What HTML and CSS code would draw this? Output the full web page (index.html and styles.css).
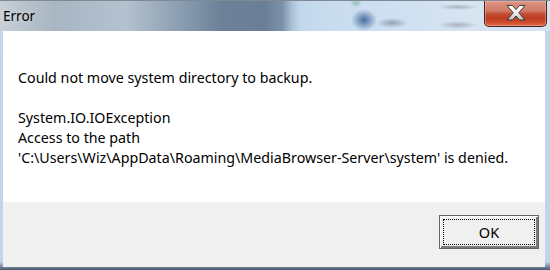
FILE: index.html
```html
<!DOCTYPE html>
<html>
<head>
<meta charset="utf-8">
<link rel="stylesheet" href="styles.css">
</head>
<body>
<div class="window">
  <div class="titlebar">
    <span class="title">Error</span>
    <button class="close" aria-label="Close">
      <svg width="20" height="16" viewBox="0 0 20 16">
        <defs>
          <linearGradient id="xg" x1="0" y1="0" x2="0" y2="1">
            <stop offset="0" stop-color="#ffffff"/>
            <stop offset="0.55" stop-color="#e9e9e9"/>
            <stop offset="1" stop-color="#bdbdbd"/>
          </linearGradient>
        </defs>
        <polygon points="1,0.5 6.5,0.5 10,4.6 13.5,0.5 19,0.5 12.8,7.8 19,15 13.5,15 10,11 6.5,15 1,15 7.2,7.8" fill="url(#xg)" stroke="#3b3b3b" stroke-width="1" stroke-linejoin="round"/>
      </svg>
    </button>
  </div>
  <div class="client">
    <div class="message">
      <p>Could not move system directory to backup.</p>
      <p>System.IO.IOException<br>Access to the path<br>'C:\Users\Wiz\AppData\Roaming\MediaBrowser-Server\system' is denied.</p>
    </div>
    <div class="footer">
      <button class="ok"><span class="focus">OK</span></button>
    </div>
  </div>
</div>
</body>
</html>
```

FILE: styles.css
```css
* { box-sizing: border-box; }
html, body { margin: 0; padding: 0; }
body {
  width: 550px;
  height: 270px;
  overflow: hidden;
  font-family: "Noto Sans", "Open Sans", sans-serif;
}
.window {
  width: 550px;
  height: 270px;
  display: flex;
  flex-direction: column;
  background: linear-gradient(to bottom, #c3d6ea 0%, #c0d4ea 97%, #46566a 100%);
}
.titlebar {
  height: 31px;
  flex: none;
  display: flex;
  align-items: flex-start;
  justify-content: space-between;
  border-top: 1px solid #7f8a96;
  background:
    radial-gradient(ellipse 13px 11px at 364px 19px, rgba(58,98,150,.9), rgba(58,98,150,0)),
    radial-gradient(ellipse 16px 5px at 392px 22px, rgba(100,115,135,.55), rgba(100,115,135,0)),
    radial-gradient(ellipse 20px 3px at 458px 6px, rgba(120,130,140,.5), rgba(120,130,140,0)),
    radial-gradient(ellipse 20px 4px at 458px 24px, rgba(120,130,140,.5), rgba(120,130,140,0)),
    radial-gradient(ellipse 6px 4px at 356px 2px, rgba(80,150,110,.45), rgba(80,150,110,0)),
    linear-gradient(to right,
      #c7cfd7 0px, #b8c2cc 25px, #a8b5c2 55px, #afbdca 95px, #b4c2cf 125px,
      #9aabbc 160px, #8094a9 195px, #6d8299 220px, #6a7f96 265px,
      #7b91a8 282px, #a8c0d8 292px, #c3d8ec 300px, #c9dcef 330px,
      #cfe0f1 400px, #d7e4f1 470px, #d5e2ef 550px);
}
.title {
  margin: 5px 0 0 3px;
  font-family: "Noto Sans", sans-serif;
  font-size: 13.5px;
  line-height: 20px;
  color: #000;
  text-shadow: 0 0 6px rgba(255,255,255,.5);
}
.close {
  width: 63px;
  height: 26px;
  margin: 0 3px 0 0;
  padding: 0;
  border: 1px solid #4a2420;
  border-top: none;
  border-radius: 0 0 5px 5px;
  display: flex;
  align-items: center;
  justify-content: center;
  background: linear-gradient(to bottom, #dd9686 0%, #d07a66 40%, #c14a32 52%, #bd3c22 68%, #cf4a2c 85%, #df6a48 100%);
  box-shadow: inset 0 0 0 1px rgba(255,200,190,.4);
}
.close svg { display: block; margin-top: -1px; }
.client {
  flex: 1;
  display: flex;
  flex-direction: column;
  margin: 0 5px 3px 3px;
}
.message {
  height: 171px;
  background: #fff;
  padding: 37px 15px 0 15px;
  font-size: 14.25px;
  line-height: 20px;
  color: #000;
}
.message p { margin: 0 0 20px 0; }
.footer {
  flex: 1;
  background: #f0f0f0;
  display: flex;
  justify-content: flex-end;
  align-items: flex-start;
  padding: 13px 6px 0 0;
}
.ok {
  width: 100px;
  height: 34px;
  padding: 3px;
  background: #f0f0f0;
  border: 1px solid #646464;
  box-shadow: inset 1px 1px 0 #ffffff, inset -2px -2px 0 #7a7a7a;
  font-family: "Noto Sans", sans-serif;
  font-size: 14.5px;
  color: #000;
  display: flex;
}
.focus {
  flex: 1;
  display: flex;
  align-items: center;
  justify-content: center;
  border: 1px dotted #000;
}
```
